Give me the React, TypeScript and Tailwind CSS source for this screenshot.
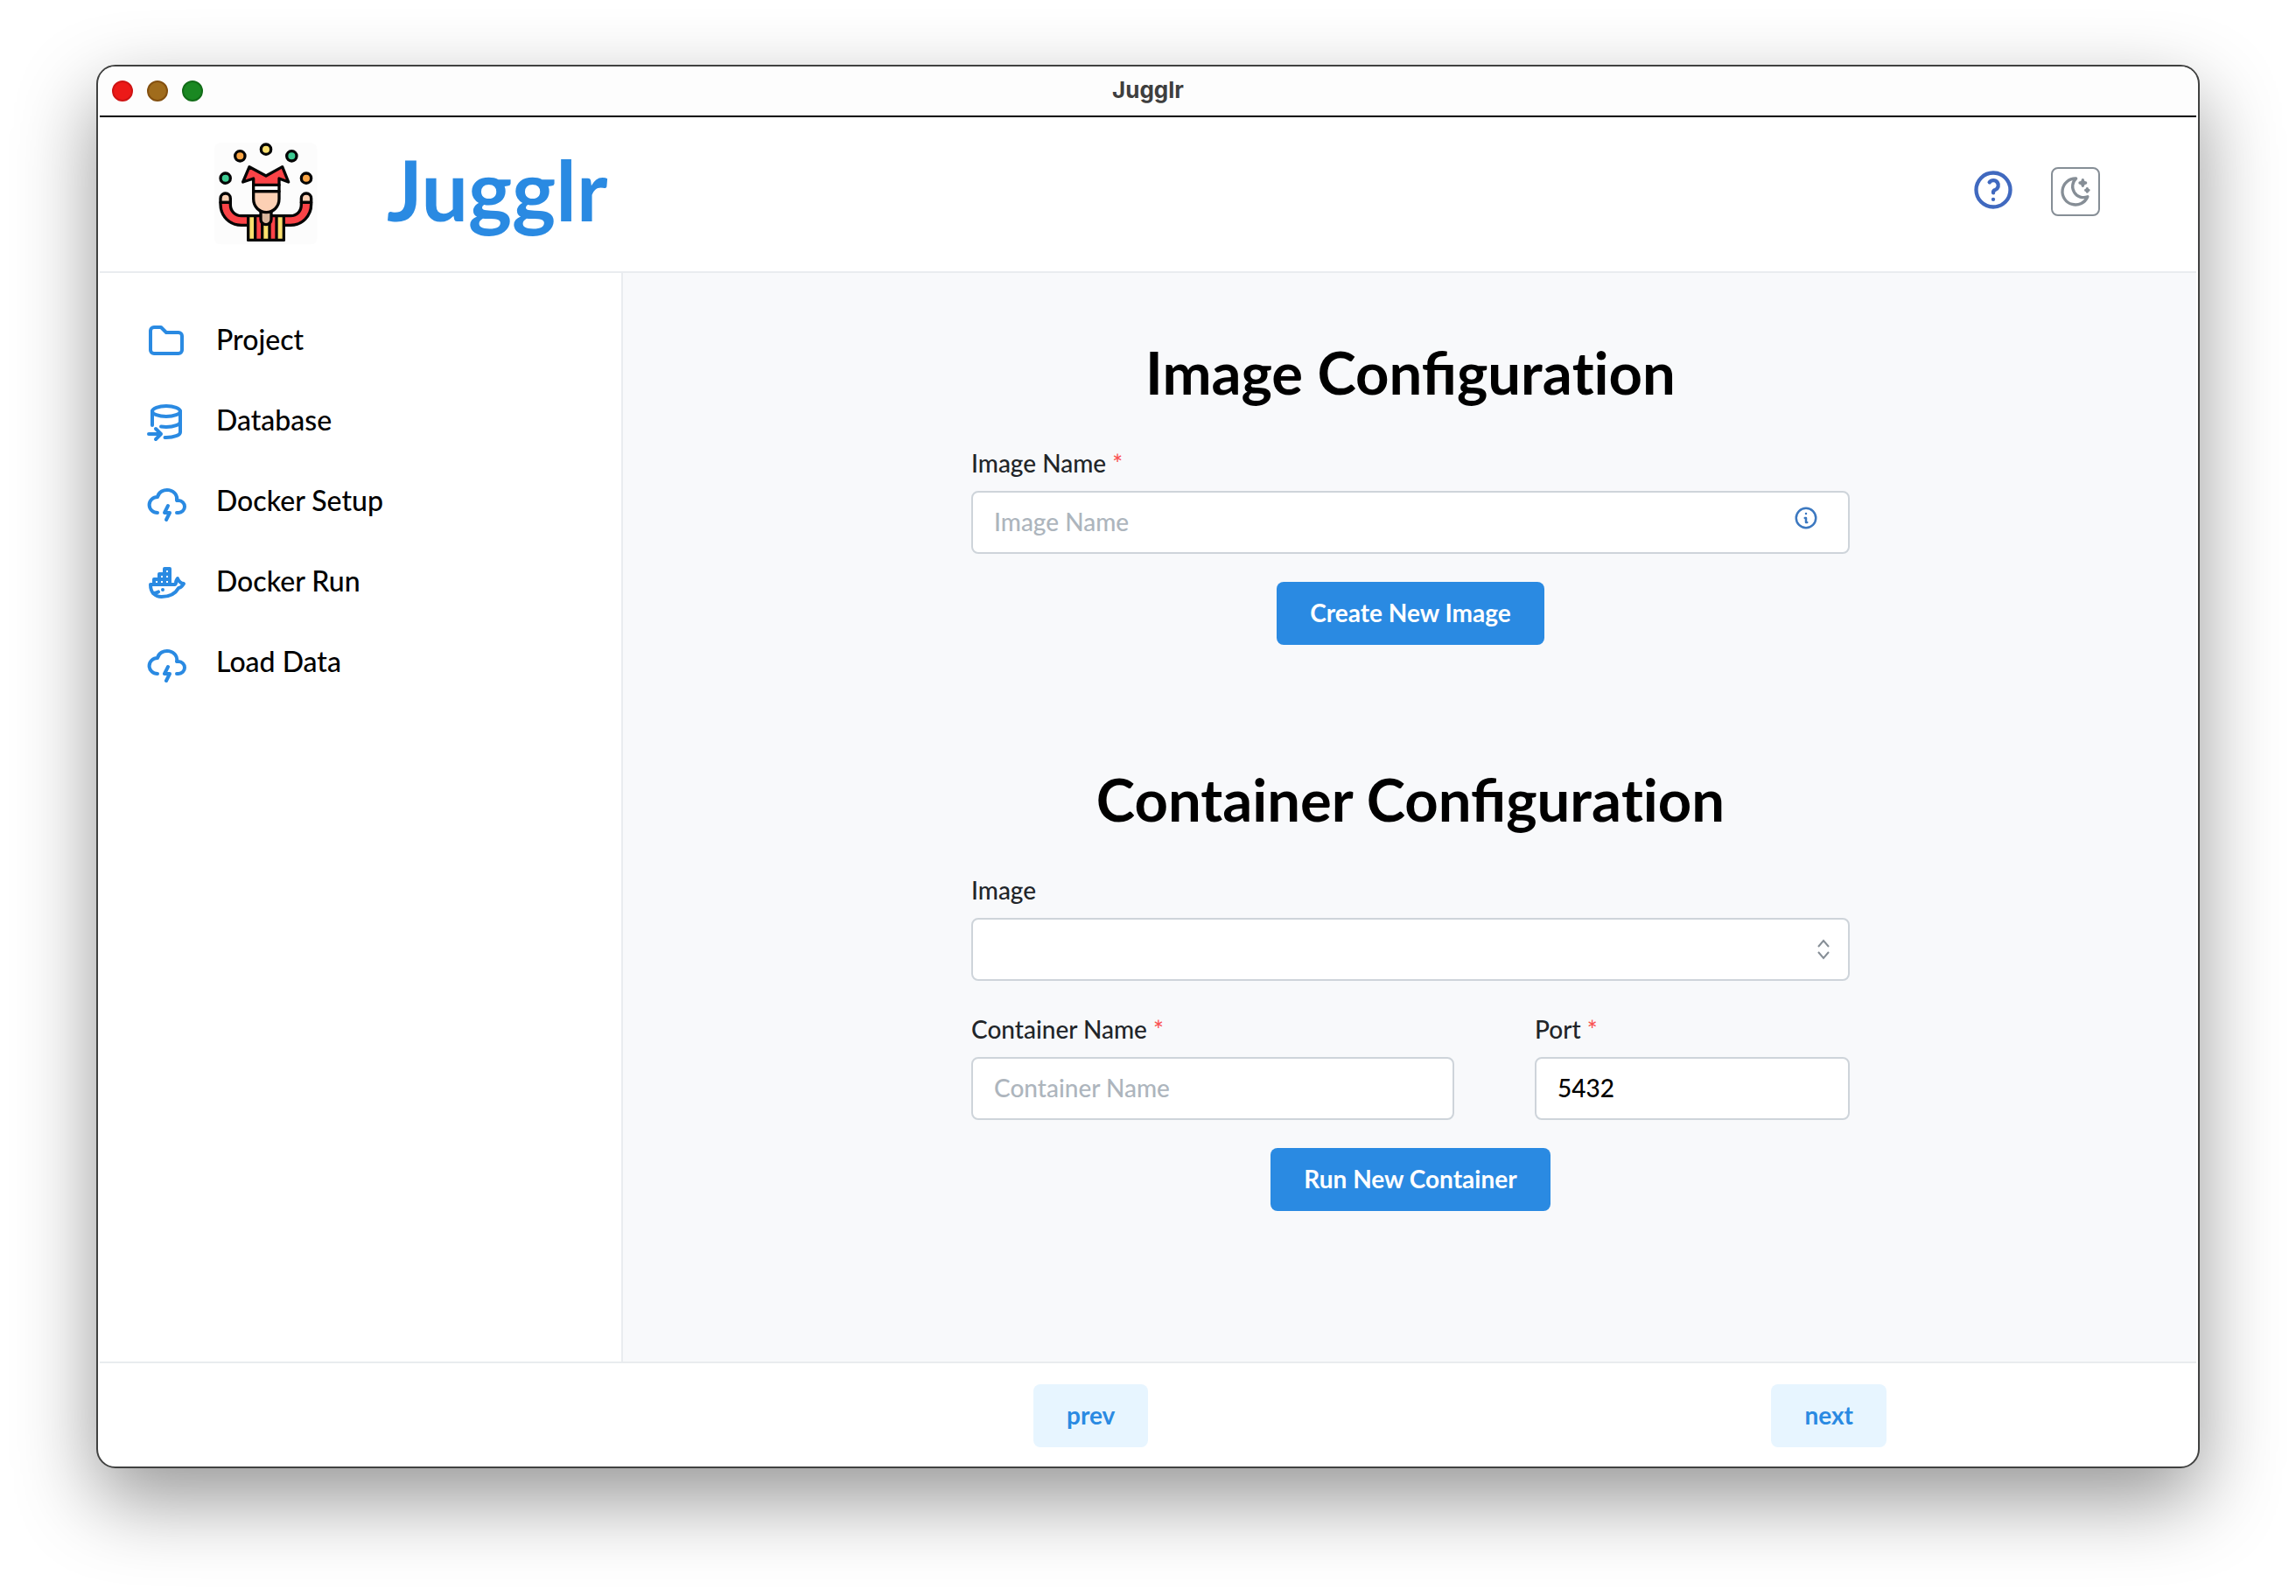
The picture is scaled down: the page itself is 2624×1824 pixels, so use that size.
import React from "react";

function Icon({ children, className, width = 2 }: { children: React.ReactNode; className: string; width?: number }) {
  return (
    <svg
      viewBox="0 0 24 24"
      fill="none"
      stroke="currentColor"
      strokeWidth={width}
      strokeLinecap="round"
      strokeLinejoin="round"
      aria-hidden="true"
      className={className}
    >
      {children}
    </svg>
  );
}

const folder = (
  <path d="M5 4h4l3 3h7a2 2 0 0 1 2 2v8a2 2 0 0 1 -2 2h-14a2 2 0 0 1 -2 -2v-11a2 2 0 0 1 2 -2" />
);

const database = (
  <>
    <ellipse cx="12" cy="6" rx="8" ry="3" />
    <path d="M4 6v8m5.009 .783c.924 .14 1.933 .217 2.991 .217c4.418 0 8 -1.343 8 -3v-6" />
    <path d="M11.252 20.987c.246 .009 .496 .013 .748 .013c4.418 0 8 -1.343 8 -3v-6m-18 7h7m-3 -3l3 3l-3 3" />
  </>
);

const cloudStorm = (
  <>
    <path d="M7 18a4.6 4.4 0 0 1 0 -9a5 4.5 0 0 1 11 2h1a3.5 3.5 0 0 1 0 7h-1" />
    <path d="M13 14l-2 4h3l-2 4" />
  </>
);

const docker = (
  <>
    <path d="M22 12.54c-1.804 -.345 -2.701 -1.08 -3.523 -2.94c-.487 .696 -1.102 1.568 -.92 2.4c.028 .238 -.32 1 -.557 1h-14c0 5.208 3.164 7 6.196 7c4.124 .022 7.828 -1.376 9.854 -5c1.146 -.101 2.296 -1.505 2.95 -2.46z" />
    <path d="M5 10h3v3h-3zM8 10h3v3h-3zM11 10h3v3h-3zM8 7h3v3h-3zM11 7h3v3h-3zM11 4h3v3h-3z" />
    <path d="M4.571 18c1.5 0 2.047 -.074 2.958 -.78" />
    <path d="M10 16v.01" />
  </>
);

const navItems = [
  { label: "Project", icon: folder },
  { label: "Database", icon: database },
  { label: "Docker Setup", icon: cloudStorm },
  { label: "Docker Run", icon: docker },
  { label: "Load Data", icon: cloudStorm },
];

function Juggler() {
  return (
    <svg viewBox="42 36 360 360" className="size-[120px] shrink-0" role="img" aria-label="Jugglr logo">
      <rect x="45" y="40" width="352" height="348" rx="20" fill="#fcfcfc" />
      <g stroke="#050505" strokeWidth="10" strokeLinejoin="round" strokeLinecap="round">
        <circle cx="222" cy="62" r="17" fill="#fbe06e" />
        <circle cx="133" cy="85" r="17" fill="#fba545" />
        <circle cx="310" cy="85" r="17" fill="#3ccb92" />
        <circle cx="83" cy="161" r="17" fill="#3ccb92" />
        <circle cx="360" cy="161" r="17" fill="#fba545" />

        <path d="M66 244V230A17 17 0 0 1 100 230V244Z" fill="#fcd0b4" />
        <path d="M343 244V230A17 17 0 0 1 377 230V244Z" fill="#fcd0b4" />
        <path d="M66 244V250C66 292 98 322 138 322H161V290H138C116 290 100 274 100 252V244Z" fill="#fb4347" />
        <path d="M377 244V250C377 292 345 322 306 322H283V290H306C328 290 343 274 343 252V244Z" fill="#fb4347" />

        <path d="M161 290H283V373H161Z" fill="#fb4347" />
        <path d="M161 290H185V373H161ZM258 290H283V373H258ZM209 312H234V373H209Z" fill="#fbe06e" />
        <path d="M204 274H240V302A18 18 0 0 1 204 302Z" fill="#d9b69c" />
        <path d="M179 206H267V232C267 260 246 278 223 278S179 260 179 232Z" fill="#fcd0b4" />
        <path d="M179 184H267V206H179Z" fill="#ffffff" />
        <path d="M165 122L222 153L278 122L299 174L267 162V184H179V162L143 174Z" fill="#fb4347" />
      </g>
    </svg>
  );
}

// The "fi" pair stays joined in headings while "ti" is drawn as two letters.
function Heading({ subject }: { subject: string }) {
  return (
    <h1 className="mb-10 text-center text-[67px] leading-[88px] font-bold text-black">
      {subject} Configura<span className="[font-variant-ligatures:none]">ti</span>on
    </h1>
  );
}

function Label({ htmlFor, children, required }: { htmlFor: string; children: string; required?: boolean }) {
  return (
    <label htmlFor={htmlFor} className="mb-3 block text-[28px] leading-10 font-medium text-[#212529]">
      {children}
      {required && <span className="text-[#fa5252]"> *</span>}
    </label>
  );
}

const field =
  "block h-[72px] w-full rounded-lg border-2 border-[#ced4da] bg-white px-6 pb-[2px] text-[28px] font-medium text-black placeholder:text-[#adb5bd] outline-none focus:border-[#228be6]";
const primary =
  "h-[72px] rounded-lg bg-[#2a8ae2] px-[38px] pb-[2px] text-[28px] font-bold text-white hover:bg-[#1c7ed6]";
const light =
  "h-[72px] rounded-lg bg-[#e7f5ff] px-[38px] pb-[2px] text-[28px] font-bold text-[#2a8ae2] hover:bg-[#d0ebff]";

export default function App() {
  return (
    <div className="flex min-h-screen flex-col bg-white px-[110px] pt-[74px] pb-[146px] font-['Lato',sans-serif]">
      <div className="flex grow flex-col overflow-hidden rounded-[22px] border-2 border-[#404140] bg-white px-[2px] shadow-[0_36px_90px_rgba(0,0,0,0.41)]">
        <div className="grid h-[58px] grid-cols-[1fr_auto_1fr] items-center border-b-2 border-black bg-[#fdfdfd]">
          <div className="flex gap-4 pl-[14px]">
            <button type="button" aria-label="Close" className="size-6 rounded-full border-2 border-[#cf1414] bg-[#ec1a18]" />
            <button type="button" aria-label="Minimize" className="size-6 rounded-full border-2 border-[#84500f] bg-[#a06c1c]" />
            <button type="button" aria-label="Zoom" className="size-6 rounded-full border-2 border-[#126d18] bg-[#1a8822]" />
          </div>
          <div className="pb-[2px] font-['Inter',sans-serif] text-[26px] leading-8 font-bold text-[#3f3f3f]">Jugglr</div>
        </div>

        <header className="flex h-[178px] items-center border-b-2 border-[#e9ecef] pr-[110px] pl-[130px]">
          <Juggler />
          <div className="ml-[78px] pb-3 text-[95px] leading-[116px] font-bold text-[#2a8ae2]">Jugglr</div>
          <div className="ml-auto flex items-center gap-10 pb-[6px]">
            <button type="button" aria-label="Help" className="pb-1 text-[#4069bf]">
              <Icon className="size-[52px]">
                <circle cx="12" cy="12" r="9" />
                <path d="M12 17v.01" />
                <path d="M12 13.5a1.5 1.5 0 0 1 1 -1.5a2.6 2.6 0 1 0 -3 -4" />
              </Icon>
            </button>
            <button
              type="button"
              aria-label="Toggle color scheme"
              className="flex size-14 items-center justify-center rounded-lg border-2 border-[#868e96] text-[#868e96]"
            >
              <Icon className="size-10">
                <path d="M12 3c.132 0 .263 0 .393 0a7.5 7.5 0 0 0 7.92 12.446a9 9 0 1 1 -8.313 -12.454z" />
                <path d="M17 4a2 2 0 0 0 2 2a2 2 0 0 0 -2 2a2 2 0 0 0 -2 -2a2 2 0 0 0 2 -2" />
                <path d="M19 11h2m-1 -1v2" />
              </Icon>
            </button>
          </div>
        </header>

        <div className="flex grow">
          <nav className="flex w-[598px] shrink-0 flex-col gap-11 border-r-2 border-[#e9ecef] pt-[54px] pl-[52px]">
            {navItems.map((item) => (
              <a key={item.label} href="#" className="flex h-12 items-center gap-[33px] text-[32px] font-medium text-black">
                <Icon className="size-12 shrink-0 text-[#2a8ae2]">{item.icon}</Icon>
                <span className="pb-1 leading-10">{item.label}</span>
              </a>
            ))}
          </nav>

          <main className="grow bg-[#f8f9fb] pt-[69px] pb-16 pl-[2px]">
            <div className="mx-auto w-full max-w-[1004px]">
              <form onSubmit={(e) => e.preventDefault()}>
                <Heading subject="Image" />
                <Label htmlFor="image-name" required>Image Name</Label>
                <div className="relative">
                  <input id="image-name" type="text" placeholder="Image Name" className={field} />
                  <Icon className="absolute top-4 right-[35px] size-[30px] text-[#3c78c0]">
                    <circle cx="12" cy="12" r="9" />
                    <path d="M12 8h.01" />
                    <path d="M11 12h1v4h1" />
                  </Icon>
                </div>
                <div className="mt-8 flex justify-center">
                  <button type="submit" className={primary}>Create New Image</button>
                </div>
              </form>

              <form className="mt-[132px]" onSubmit={(e) => e.preventDefault()}>
                <Heading subject="Container" />
                <Label htmlFor="image">Image</Label>
                <div className="relative">
                  <select id="image" className={"appearance-none " + field}>
                    <option value=""></option>
                  </select>
                  <svg
                    viewBox="0 0 16 24"
                    fill="none"
                    stroke="#868e96"
                    strokeWidth="2"
                    aria-hidden="true"
                    className="pointer-events-none absolute top-6 right-[22px] h-6 w-4"
                  >
                    <path d="M2 9L8 2L14 9M2 15L8 22L14 15" />
                  </svg>
                </div>
                <div className="mt-[35px] grid grid-cols-[1fr_360px] gap-[92px]">
                  <div>
                    <Label htmlFor="container-name" required>Container Name</Label>
                    <input id="container-name" type="text" placeholder="Container Name" className={field} />
                  </div>
                  <div>
                    <Label htmlFor="port" required>Port</Label>
                    <input id="port" type="text" defaultValue="5432" className={field} />
                  </div>
                </div>
                <div className="mt-8 flex justify-center">
                  <button type="submit" className={primary}>Run New Container</button>
                </div>
              </form>
            </div>
          </main>
        </div>

        <footer className="flex h-[120px] items-center justify-between border-t-2 border-[#e9ecef] pt-[2px] pr-[354px] pl-[1067px]">
          <button type="button" className={light}>prev</button>
          <button type="button" className={light}>next</button>
        </footer>
      </div>
    </div>
  );
}
